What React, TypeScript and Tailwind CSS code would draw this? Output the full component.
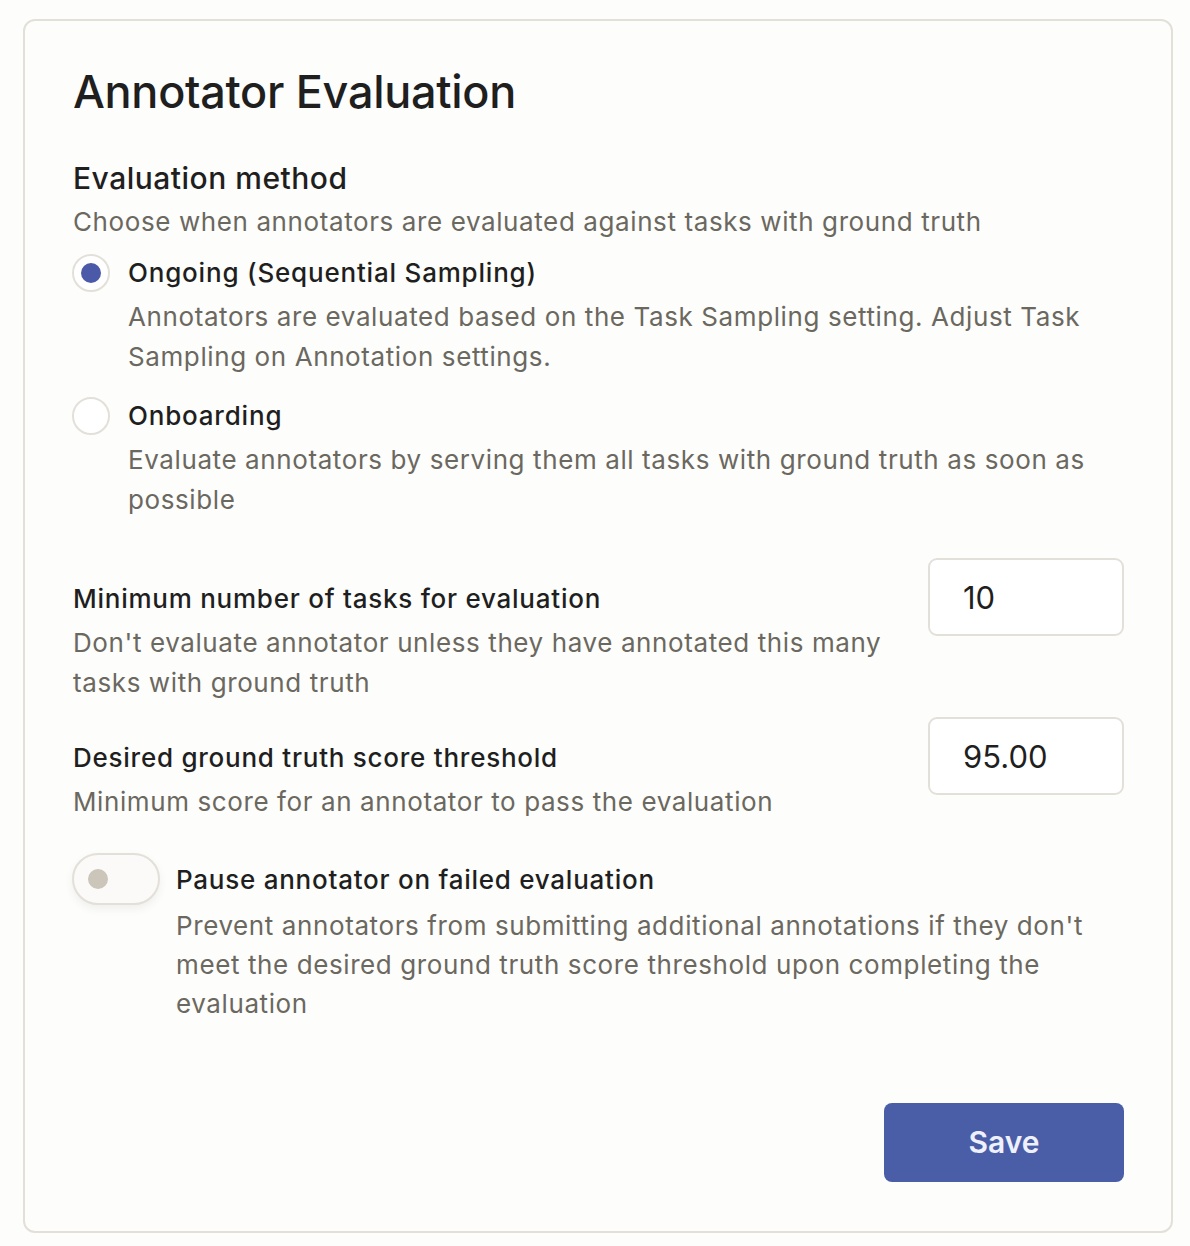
import { useState } from "react";

const FONT = { fontFamily: "Inter, 'Noto Sans', sans-serif" };

export default function App() {
  const [method, setMethod] = useState("ongoing");
  const [pause, setPause] = useState(false);
  const [minTasks, setMinTasks] = useState("10");
  const [threshold, setThreshold] = useState("95.00");

  const options = [
    {
      id: "ongoing",
      label: "Ongoing (Sequential Sampling)",
      desc: "Annotators are evaluated based on the Task Sampling setting. Adjust Task Sampling on Annotation settings.",
    },
    {
      id: "onboarding",
      label: "Onboarding",
      desc: "Evaluate annotators by serving them all tasks with ground truth as soon as possible",
    },
  ];

  return (
    <div className="min-h-screen bg-[#fdfdfc] pt-[19px] pl-[23px]" style={FONT}>
      <div className="w-[1150px] rounded-[12px] border-2 border-[#e3e0d9] bg-[#fdfdfc] pt-[46px] pb-[49px] pl-[48px] pr-[47px] text-[#1f1f1f]">
        <h1 className="text-[45px] leading-[50px] font-medium tracking-[-0.3px]">Annotator Evaluation</h1>

        <div className="mt-[43px] text-[30px] leading-[36px] font-medium tracking-[0.5px]">Evaluation method</div>
        <div className="mt-[6px] text-[26px] leading-[40px] tracking-[0.6px] text-[#6b685f]">
          Choose when annotators are evaluated against tasks with ground truth
        </div>

        <div className="mt-[11px] flex flex-col gap-[19px]">
          {options.map((o) => (
            <label key={o.id} className="flex gap-[18px] cursor-pointer" onClick={() => setMethod(o.id)}>
              <span className="mt-[1px] -ml-[1px] flex h-[38px] w-[38px] shrink-0 items-center justify-center rounded-full border-2 border-[#e3e0d9] bg-white">
                {method === o.id && <span className="h-[20px] w-[20px] rounded-full bg-[#4a5aa8]" />}
              </span>
              <span className="flex flex-col">
                <span className="text-[26px] leading-[40px] font-medium tracking-[0.8px]">{o.label}</span>
                <span className="mt-[4px] text-[26px] leading-[40px] tracking-[0.6px] text-[#6b685f]">{o.desc}</span>
              </span>
            </label>
          ))}
        </div>

        <div className="mt-[38px] flex items-start justify-between gap-[30px]">
          <div className="pt-[21px]">
            <div className="text-[26px] leading-[40px] font-medium tracking-[0.75px]">Minimum number of tasks for evaluation</div>
            <div className="mt-[4px] text-[26px] leading-[40px] tracking-[0.6px] text-[#6b685f]">
              Don't evaluate annotator unless they have annotated this many tasks with ground truth
            </div>
          </div>
          <input
            value={minTasks}
            onChange={(e) => setMinTasks(e.target.value)}
            className="h-[78px] w-[196px] shrink-0 rounded-[9px] border-2 border-[#e3e0d9] bg-white px-[33px] text-[31px] text-[#1f1f1f] outline-none"
          />
        </div>

        <div className="mt-[14px] flex items-start justify-between gap-[30px]">
          <div className="pt-[21px]">
            <div className="text-[26px] leading-[40px] font-medium tracking-[0.75px]">Desired ground truth score threshold</div>
            <div className="mt-[4px] text-[26px] leading-[40px] tracking-[0.6px] text-[#6b685f]">
              Minimum score for an annotator to pass the evaluation
            </div>
          </div>
          <input
            value={threshold}
            onChange={(e) => setThreshold(e.target.value)}
            className="h-[78px] w-[196px] shrink-0 rounded-[9px] border-2 border-[#e3e0d9] bg-white px-[33px] text-[31px] text-[#1f1f1f] outline-none"
          />
        </div>

        <div className="mt-[31px] flex gap-[16px]">
          <button
            onClick={() => setPause(!pause)}
            className={`relative -ml-[1px] h-[52px] w-[88px] shrink-0 rounded-full border-2 border-[#e3e0d9] ${pause ? "bg-[#4a5aa8]" : "bg-[#fbfaf8]"} shadow-[0_4px_10px_rgba(0,0,0,0.06)]`}
          >
            <span
              className={`absolute top-[14px] h-[20px] w-[20px] rounded-full ${pause ? "left-[52px] bg-white" : "left-[14px] bg-[#cbc5ba]"}`}
            />
          </button>
          <div className="pt-[7px]">
            <div className="text-[26px] leading-[40px] font-medium tracking-[0.75px]">Pause annotator on failed evaluation</div>
            <div className="mt-[6px] text-[26px] leading-[39px] tracking-[0.6px] text-[#6b685f]">
              Prevent annotators from submitting additional annotations if they don't meet the desired ground truth score threshold upon completing the evaluation
            </div>
          </div>
        </div>

        <div className="mt-[80px] flex justify-end">
          <button className="h-[79px] w-[240px] rounded-[8px] bg-[#4a5ea8] text-[30px] font-semibold text-[#eef0fb]">
            Save
          </button>
        </div>
      </div>
    </div>
  );
}
